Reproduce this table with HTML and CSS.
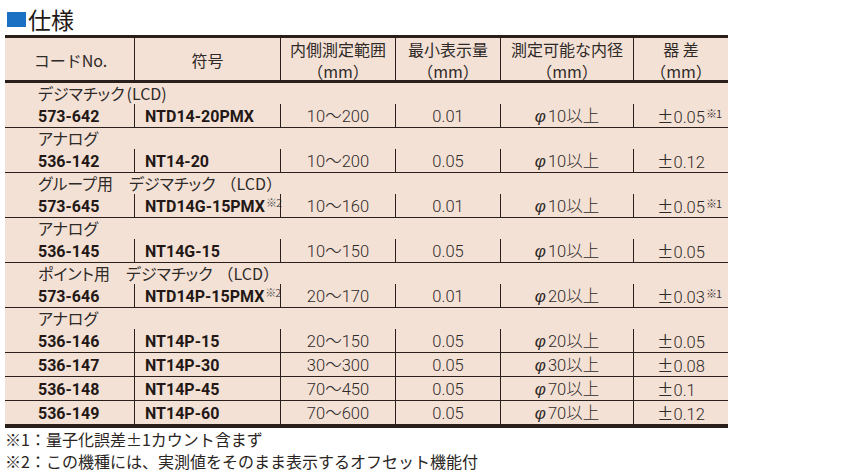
FILE: index.html
```html
<!DOCTYPE html>
<html lang="ja">
<head>
<meta charset="utf-8">
<title>仕様</title>
<link rel="stylesheet" href="styles.css">
</head>
<body>
<section class="spec">
  <h2 class="title"><span class="mark"></span>仕様</h2>
  <div class="table">
    <div class="row head">
      <div class="cell one">コードNo.</div>
      <div class="cell">符号</div>
      <div class="cell">内側測定範囲<br>（mm）</div>
      <div class="cell">最小表示量<br>（mm）</div>
      <div class="cell">測定可能な内径<br>（mm）</div>
      <div class="cell">器 差<br>（mm）</div>
    </div>

    <div class="group">
      <div class="label">デジマチック<span class="lcd-half">(LCD)</span></div>
      <div class="row data">
        <div class="cell code">573-642</div>
        <div class="cell sym">NTD14-20PMX</div>
        <div class="cell num">10〜200</div>
        <div class="cell num">0.01</div>
        <div class="cell num"><span class="phi">φ</span>10以上</div>
        <div class="cell err"><span class="pm">±</span>0.05<sup class="note">※1</sup></div>
      </div>
    </div>

    <div class="group">
      <div class="label">アナログ</div>
      <div class="row data">
        <div class="cell code">536-142</div>
        <div class="cell sym">NT14-20</div>
        <div class="cell num">10〜200</div>
        <div class="cell num">0.05</div>
        <div class="cell num"><span class="phi">φ</span>10以上</div>
        <div class="cell err"><span class="pm">±</span>0.12</div>
      </div>
    </div>

    <div class="group">
      <div class="label">グループ用　デジマチック<span class="lcd">（LCD）</span></div>
      <div class="row data">
        <div class="cell code">573-645</div>
        <div class="cell sym">NTD14G-15PMX<sup class="note">※2</sup></div>
        <div class="cell num">10〜160</div>
        <div class="cell num">0.01</div>
        <div class="cell num"><span class="phi">φ</span>10以上</div>
        <div class="cell err"><span class="pm">±</span>0.05<sup class="note">※1</sup></div>
      </div>
    </div>

    <div class="group">
      <div class="label">アナログ</div>
      <div class="row data">
        <div class="cell code">536-145</div>
        <div class="cell sym">NT14G-15</div>
        <div class="cell num">10〜150</div>
        <div class="cell num">0.05</div>
        <div class="cell num"><span class="phi">φ</span>10以上</div>
        <div class="cell err"><span class="pm">±</span>0.05</div>
      </div>
    </div>

    <div class="group">
      <div class="label">ポイント用　デジマチック<span class="lcd">（LCD）</span></div>
      <div class="row data">
        <div class="cell code">573-646</div>
        <div class="cell sym">NTD14P-15PMX<sup class="note">※2</sup></div>
        <div class="cell num">20〜170</div>
        <div class="cell num">0.01</div>
        <div class="cell num"><span class="phi">φ</span>20以上</div>
        <div class="cell err"><span class="pm">±</span>0.03<sup class="note">※1</sup></div>
      </div>
    </div>

    <div class="group">
      <div class="label">アナログ</div>
      <div class="row data">
        <div class="cell code">536-146</div>
        <div class="cell sym">NT14P-15</div>
        <div class="cell num">20〜150</div>
        <div class="cell num">0.05</div>
        <div class="cell num"><span class="phi">φ</span>20以上</div>
        <div class="cell err"><span class="pm">±</span>0.05</div>
      </div>
      <div class="row data">
        <div class="cell code">536-147</div>
        <div class="cell sym">NT14P-30</div>
        <div class="cell num">30〜300</div>
        <div class="cell num">0.05</div>
        <div class="cell num"><span class="phi">φ</span>30以上</div>
        <div class="cell err"><span class="pm">±</span>0.08</div>
      </div>
      <div class="row data">
        <div class="cell code">536-148</div>
        <div class="cell sym">NT14P-45</div>
        <div class="cell num">70〜450</div>
        <div class="cell num">0.05</div>
        <div class="cell num"><span class="phi">φ</span>70以上</div>
        <div class="cell err"><span class="pm">±</span>0.1</div>
      </div>
      <div class="row data last">
        <div class="cell code">536-149</div>
        <div class="cell sym">NT14P-60</div>
        <div class="cell num">70〜600</div>
        <div class="cell num">0.05</div>
        <div class="cell num"><span class="phi">φ</span>70以上</div>
        <div class="cell err"><span class="pm">±</span>0.12</div>
      </div>
    </div>
  </div>
  <div class="notes">
    <p>※1：量子化誤差±1カウント含まず</p>
    <p>※2：この機種には、実測値をそのまま表示するオフセット機能付</p>
  </div>
</section>
</body>
</html>
```

FILE: styles.css
```css
html, body {
  margin: 0;
  padding: 0;
  background: #ffffff;
}

body {
  font-family: "Noto Sans CJK JP", sans-serif;
  color: #2a2522;
}

.spec {
  padding-left: 5px;
}

.title {
  margin: 0;
  height: 35px;
  display: flex;
  align-items: center;
  font-size: 23px;
  font-weight: 400;
  line-height: 1;
  color: #231815;
  padding-top: 3px;
  box-sizing: border-box;
}

.mark {
  display: inline-block;
  width: 19px;
  height: 15px;
  background: #1b70c4;
  margin-left: 2px;
  margin-right: 2px;
}

.table {
  width: 723px;
  background: #f4e1d6;
  border-top: 3px solid #2b1f1b;
  border-bottom: 3px solid #2b1f1b;
}

.row {
  display: grid;
  grid-template-columns: 129px 146px 115px 105px 133px 95px;
}

.cell {
  display: flex;
  align-items: center;
  border-left: 1px solid #2b1f1b;
  box-sizing: border-box;
  white-space: nowrap;
}

.cell:first-child {
  border-left: none;
}

.head {
  height: 45px;
  border-bottom: 3px solid #2b1f1b;
  box-sizing: border-box;
}

.head .cell {
  justify-content: center;
  text-align: center;
  font-size: 16px;
  line-height: 22px;
  color: #2e2a28;
}

.head .cell.one {
  padding-left: 2px;
}

.group {
  border-bottom: 1px solid #2b1f1b;
}

.label {
  height: 21px;
  line-height: 21px;
  padding-left: 33px;
  font-size: 16px;
  font-feature-settings: "palt";
  color: #2e2a28;
  white-space: nowrap;
}

.label .lcd {
  font-feature-settings: normal;
  margin-left: 5px;
}

.label .lcd-half {
  margin-left: 2px;
}

.data {
  height: 23px;
}

.data + .data {
  border-top: 1px solid #2b1f1b;
  height: 23px;
}

.data .cell {
  display: block;
  padding-top: 2px;
  font-size: 16px;
  line-height: 21px;
}

.code {
  padding-left: 33px;
  font-family: "Roboto", "Liberation Sans", sans-serif;
  font-weight: 700;
  color: #231815;
}

.data .sym {
  padding-left: 10px;
  font-family: "Roboto", "Liberation Sans", sans-serif;
  font-weight: 700;
  color: #231815;
}

.data .code {
  padding-left: 33px;
}

.num {
  text-align: center;
  font-family: "Roboto", "Noto Sans CJK JP", sans-serif;
  font-weight: 300;
  color: #2e2a28;
}

.data .num,
.data .err {
  font-size: 16.5px;
}

.data .err {
  padding-left: 23px;
  font-family: "Roboto", "Noto Sans CJK JP", sans-serif;
  font-weight: 300;
  color: #2e2a28;
}

.phi {
  font-family: "Liberation Sans", sans-serif;
  font-style: italic;
  font-weight: 400;
  font-size: 17px;
  margin-right: 2px;
}

.pm {
  font-family: "Noto Sans CJK JP", sans-serif;
  font-weight: 400;
}

.note {
  font-family: "Noto Sans CJK JP", sans-serif;
  font-weight: 400;
  font-size: 11px;
  line-height: 0;
  color: #3a3432;
  vertical-align: 5px;
  margin-left: 1px;
  letter-spacing: -1px;
}

.sym .note {
  color: #555;
}

.notes {
  padding-top: 0;
}

.notes p {
  margin: 0;
  font-size: 16px;
  line-height: 22px;
  color: #2a2522;
}
```
